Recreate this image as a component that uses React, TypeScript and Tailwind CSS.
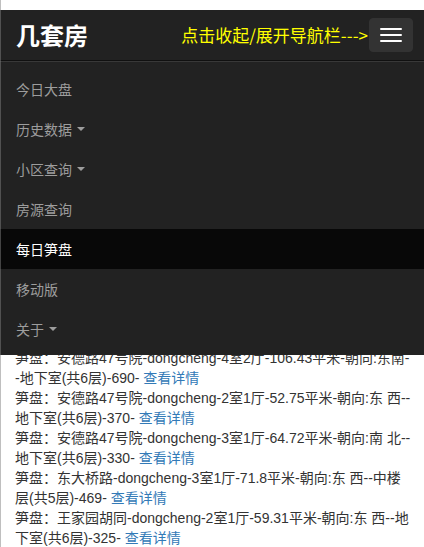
import React from "react";

const menu = [
  { name: "今日大盘" },
  { name: "历史数据", caret: true },
  { name: "小区查询", caret: true },
  { name: "房源查询" },
  { name: "每日笋盘", active: true },
  { name: "移动版" },
  { name: "关于", caret: true },
];

// each record wraps onto two lines in the screenshot
const houses = [
  ["笋盘：安德路47号院-dongcheng-4室2厅-106.43平米-朝向:东南-", "-地下室(共6层)-690- "],
  ["笋盘：安德路47号院-dongcheng-2室1厅-52.75平米-朝向:东 西--", "地下室(共6层)-370- "],
  ["笋盘：安德路47号院-dongcheng-3室1厅-64.72平米-朝向:南 北--", "地下室(共6层)-330- "],
  ["笋盘：东大桥路-dongcheng-3室1厅-71.8平米-朝向:东 西--中楼", "层(共5层)-469- "],
  ["笋盘：王家园胡同-dongcheng-2室1厅-59.31平米-朝向:东 西--地", "下室(共6层)-325- "],
];

const Caret = () => (
  <span className="ml-[5px] inline-block align-middle w-0 h-0 border-t-[4px] border-t-current border-x-[4px] border-x-transparent" />
);

export default function App() {
  return (
    <div className="relative h-[547px] w-full overflow-hidden bg-white font-['Liberation_Sans','Noto_Sans_CJK_SC',sans-serif]">
      {/* list behind the fixed navbar */}
      <div className="pt-[348px] px-[15px] text-[14px] leading-[20px] text-[#333]">
        {houses.map((h, i) => (
          <div key={i} className="whitespace-nowrap">
            <div className="h-[20px]">{h[0]}</div>
            <div className="h-[20px]">
              {h[1]}
              <a href="#" className="text-[#337ab7]">查看详情</a>
            </div>
          </div>
        ))}
      </div>

      <nav className="absolute left-0 right-0 top-[10px] bg-[#222] pb-[6px]">
        <div className="flex h-[50px] items-center">
          <a href="#" className="pl-[16px] text-[24px] font-bold leading-[24px] text-white font-['Noto_Sans_CJK_SC',sans-serif]">
            几套房
          </a>
          <div className="ml-auto flex items-center">
            <span className="text-[17px] leading-[20px] text-[#ffff00] font-['Noto_Sans_CJK_SC',sans-serif]">
              点击收起/展开导航栏---&gt;
            </span>
            <button className="ml-[1px] mr-[11px] flex h-[34px] w-[44px] flex-col items-center justify-center gap-[4px] rounded-[4px] border border-[#333] bg-[#333]">
              <span className="block h-[2px] w-[22px] rounded-[1px] bg-white" />
              <span className="block h-[2px] w-[22px] rounded-[1px] bg-white" />
              <span className="block h-[2px] w-[22px] rounded-[1px] bg-white" />
            </button>
          </div>
        </div>
        <div className="border-t border-[#101010] shadow-[inset_0_1px_0_rgba(255,255,255,0.1)]">
          <ul className="mt-[8px] font-['Noto_Sans_CJK_SC',sans-serif] text-[14px] leading-[20px]">
            {menu.map((m) => (
              <li key={m.name}>
                <a
                  href="#"
                  className={`flex items-center px-[16px] py-[10px] ${
                    m.active ? "bg-[#080808] text-white" : "text-[#9d9d9d]"
                  }`}
                >
                  {m.name}
                  {m.caret && <Caret />}
                </a>
              </li>
            ))}
          </ul>
        </div>
      </nav>

      <div className="absolute left-0 top-0 bottom-0 w-px bg-[#808080]/50" />
    </div>
  );
}
